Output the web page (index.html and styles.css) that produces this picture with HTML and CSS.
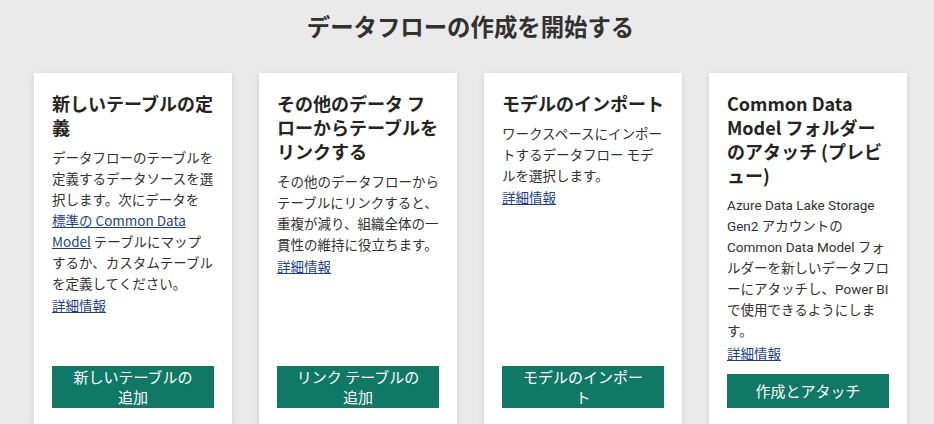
FILE: index.html
```html
<!DOCTYPE html>
<html>
<head>
<meta charset="utf-8">
<title>データフローの作成を開始する</title>
<link rel="stylesheet" href="styles.css">
</head>
<body>
<main class="page">
  <h1 class="page-title">データフローの作成を開始する</h1>
  <div class="cards">
    <section class="card">
      <div class="card-main">
        <h2 class="card-title">新しいテーブルの定義</h2>
        <p class="card-text">データフローのテーブルを定義するデータソースを選択します。次にデータを <a href="#" class="link">標準の Common Data Model</a> テーブルにマップするか、カスタムテーブルを定義してください。</p>
        <a href="#" class="link more">詳細情報</a>
      </div>
      <button class="btn">新しいテーブルの追加</button>
    </section>
    <section class="card">
      <div class="card-main">
        <h2 class="card-title">その他のデータ フローからテーブルをリンクする</h2>
        <p class="card-text">その他のデータフローからテーブルにリンクすると、重複が減り、組織全体の一貫性の維持に役立ちます。</p>
        <a href="#" class="link more">詳細情報</a>
      </div>
      <button class="btn">リンク テーブルの追加</button>
    </section>
    <section class="card">
      <div class="card-main">
        <h2 class="card-title">モデルのインポート</h2>
        <p class="card-text">ワークスペースにインポートするデータフロー モデルを選択します。</p>
        <a href="#" class="link more">詳細情報</a>
      </div>
      <button class="btn">モデルのインポート</button>
    </section>
    <section class="card">
      <div class="card-main">
        <h2 class="card-title">Common Data Model フォルダーのアタッチ (プレビュー)</h2>
        <p class="card-text card-text-latin">Azure Data Lake Storage Gen2 アカウントの Common Data Model フォルダーを新しいデータフローにアタッチし、Power BI で使用できるようにします。</p>
        <a href="#" class="link more">詳細情報</a>
      </div>
      <button class="btn">作成とアタッチ</button>
    </section>
  </div>
</main>
</body>
</html>
```

FILE: styles.css
```css
html, body {
  margin: 0;
  padding: 0;
  overflow: hidden;
}
body {
  background: #eaeaea;
  font-family: "Noto Sans CJK JP", "Noto Sans", sans-serif;
  color: #323130;
  line-break: loose;
}
.page {
  padding: 10px 27px 0 34px;
}
.page-title {
  margin: 0 0 31px;
  font-size: 23.4px;
  line-height: 32px;
  font-weight: 700;
  text-align: center;
  color: #323130;
}
.cards {
  display: flex;
  gap: 27px;
  align-items: stretch;
}
.card {
  width: 198px;
  box-sizing: border-box;
  padding: 18px 18px 18px;
  background: #fff;
  box-shadow: 0 1.6px 6px rgba(0,0,0,0.13), 0 0.3px 1px rgba(0,0,0,0.11);
  display: flex;
  flex-direction: column;
}
.card-main {
  flex: 1;
  display: flex;
  flex-direction: column;
  align-items: flex-start;
}
.card-title {
  margin: 0 0 8px;
  font-size: 18px;
  line-height: 24px;
  font-weight: 700;
  color: #252423;
}
.card-text {
  margin: 0;
  width: 162px;
  font-size: 13.5px;
  line-height: 21px;
  color: #323130;
}
.card-text-latin {
  font-family: "Roboto", "Noto Sans CJK JP", sans-serif;
}
.link {
  color: #1e3f8c;
  text-decoration: underline;
}
.more {
  font-size: 13.5px;
  line-height: 21px;
  margin-top: 1px;
}
.btn {
  margin-top: 10px;
  min-height: 34px;
  padding: 1px 16px;
  border: 0;
  background: #117865;
  color: #fff;
  font-family: inherit;
  font-size: 15px;
  line-height: 20px;
  display: flex;
  align-items: center;
  justify-content: center;
  text-align: center;
}
```
